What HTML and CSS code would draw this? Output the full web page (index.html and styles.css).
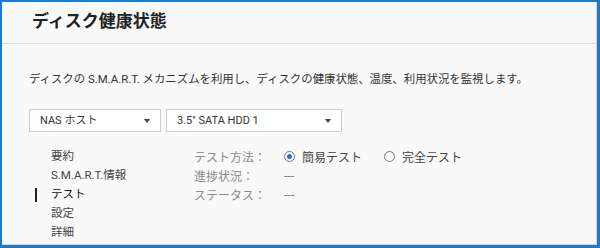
FILE: index.html
```html
<!DOCTYPE html>
<html lang="ja">
<head>
    <meta charset="UTF-8">
    <title>ディスク健康状態</title>
    <link rel="stylesheet" href="styles.css">
</head>
<body>
    <div class="frame">
        <div class="header">ディスク健康状態</div>
        <div class="content">
            <p class="desc">ディスクの S.M.A.R.T. メカニズムを利用し、ディスクの健康状態、温度、利用状況を監視します。</p>
            <div class="selects">
                <div class="select host">NAS ホスト<span class="arrow"></span></div>
                <div class="select disk">3.5" SATA HDD 1<span class="arrow"></span></div>
            </div>
            <div class="panel">
                <ul class="nav">
                    <li>要約</li>
                    <li>S.M.A.R.T.情報</li>
                    <li class="active">テスト</li>
                    <li>設定</li>
                    <li>詳細</li>
                </ul>
                <div class="fields">
                    <div class="row">
                        <span class="label">テスト方法：</span>
                        <span class="radio checked"></span><span class="opt">簡易テスト</span>
                        <span class="radio"></span><span class="opt">完全テスト</span>
                    </div>
                    <div class="row">
                        <span class="label">進捗状況：</span>
                        <span class="value">---</span>
                    </div>
                    <div class="row">
                        <span class="label">ステータス：</span>
                        <span class="value">---</span>
                    </div>
                </div>
            </div>
        </div>
    </div>
</body>
</html>
```

FILE: styles.css
```css
body {
    margin: 0;
    font-family: Roboto, "Noto Sans CJK JP", sans-serif;
    background: #fff;
}
.frame {
    width: 600px;
    height: 248px;
    box-sizing: border-box;
    border: 2px solid #1b7ad2;
    border-bottom-width: 3px;
    border-right-width: 3px;
    background: #f9f9f9;
    box-shadow: inset -1px -1px 0 #d8d8d8;
}
.header {
    height: 41px;
    line-height: 38px;
    padding-left: 30px;
    font-size: 17px;
    font-weight: bold;
    color: #222;
    border-bottom: 1px solid #dcdcdc;
}
.content {
    padding: 0 27px;
}
.desc {
    margin: 26px 0 0;
    font-size: 11.4px;
    line-height: 18px;
    color: #333;
}
.selects {
    display: flex;
    gap: 5px;
    margin-top: 21px;
}
.select {
    position: relative;
    box-sizing: border-box;
    height: 23px;
    line-height: 21px;
    padding-left: 10px;
    font-size: 11px;
    color: #333;
    background: #fff;
    border: 1px solid #cfcfcf;
}
.select.host {
    width: 132px;
}
.select.disk {
    width: 176px;
}
.arrow {
    position: absolute;
    right: 10px;
    top: 9px;
    border-left: 3.5px solid transparent;
    border-right: 3.5px solid transparent;
    border-top: 4px solid #444;
}
.panel {
    display: flex;
    margin-top: 15px;
}
.nav {
    list-style: none;
    margin: 0;
    padding: 0;
    width: 165px;
}
.nav li {
    position: relative;
    padding-left: 22px;
    font-size: 11.5px;
    line-height: 19px;
    color: #444;
}
.nav li.active {
    color: #111;
}
.nav li.active::before {
    content: "";
    position: absolute;
    left: 6px;
    top: 3px;
    width: 2px;
    height: 14px;
    background: #222;
}
.row {
    display: flex;
    align-items: center;
    height: 19px;
    font-size: 12px;
    color: #8a8a8a;
}
.label {
    width: 90px;
}
.value {
    color: #777;
}
.radio {
    box-sizing: border-box;
    width: 11px;
    height: 11px;
    border: 1px solid #777;
    border-radius: 50%;
    margin-right: 7px;
    position: relative;
}
.radio.checked::after {
    content: "";
    position: absolute;
    left: 2px;
    top: 2px;
    width: 5px;
    height: 5px;
    border-radius: 50%;
    background: #2a6fd6;
}
.opt {
    color: #444;
    margin-right: 22px;
}
```
